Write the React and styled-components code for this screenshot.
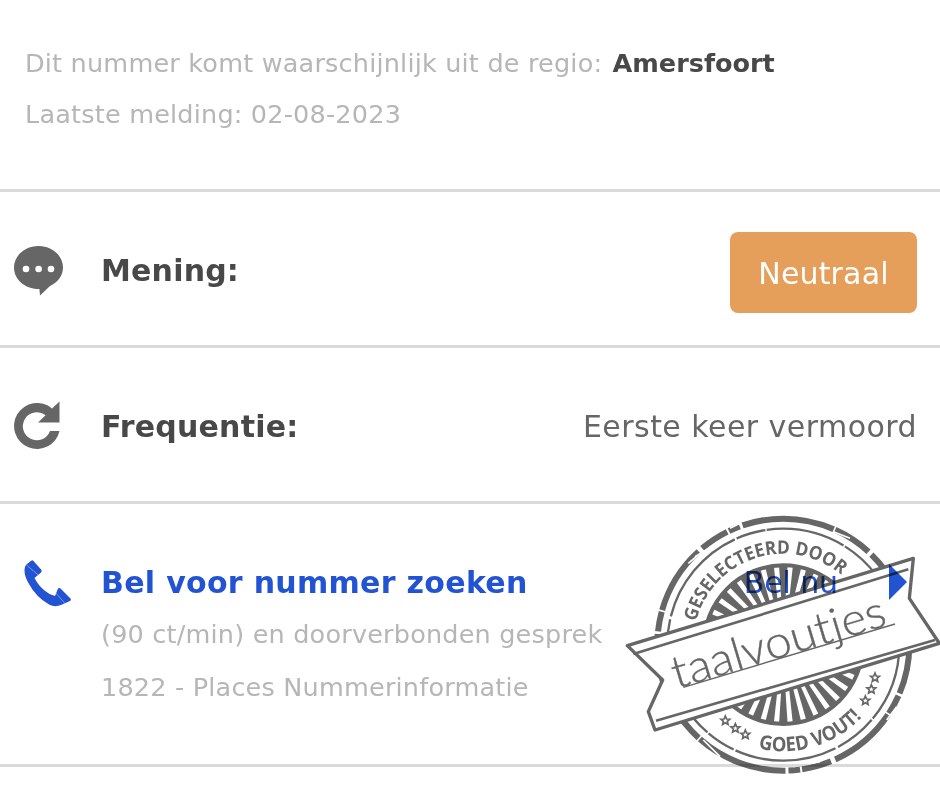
import React from "react";
import styled, { createGlobalStyle } from "styled-components";

const Global = createGlobalStyle`
  html, body { margin: 0; padding: 0; background: #fff; }
  body { font-family: "DejaVu Sans", Verdana, sans-serif; }
`;

const Page = styled.div`
  position: relative;
  width: 940px;
  height: 789px;
  overflow: hidden;
  background: #fff;
`;

const Intro = styled.section`
  height: 192px;
  padding: 48px 25px 0;
  box-sizing: border-box;
  border-bottom: 3px solid #dadada;
  display: flex;
  flex-direction: column;
  gap: 20px;
`;

const IntroLine = styled.p`
  margin: 0;
  font-size: 25.5px;
  letter-spacing: 0.2px;
  line-height: 31px;
  color: #b6b6b6;
  white-space: nowrap;
  b { color: #484848; font-weight: 700; letter-spacing: 0; margin-left: 2px; }
`;

const Row = styled.section`
  height: ${(p) => p.$h}px;
  box-sizing: border-box;
  border-bottom: 3px solid #dadada;
  display: flex;
  align-items: ${(p) => (p.$top ? "flex-start" : "center")};
  padding: ${(p) => (p.$top ? "58px 23px 0 0" : "7px 23px 0 0")};
`;

const IconCell = styled.div`
  width: 101px;
  flex: none;
  display: flex;
  padding-left: ${(p) => p.$pad}px;
  margin-top: ${(p) => p.$shift}px;
  box-sizing: border-box;
`;

const Label = styled.div`
  flex: 1;
  font-size: 30px;
  font-weight: 700;
  letter-spacing: 0.2px;
  color: #484848;
  padding-bottom: 3px;
`;

const Value = styled.div`
  font-size: 30px;
  letter-spacing: 0.45px;
  color: #666;
  white-space: nowrap;
  padding-bottom: 3px;
`;

const Badge = styled.div`
  width: 187px;
  height: 81px;
  border-radius: 8px;
  background: #e59f5a;
  color: #fff;
  font-size: 30px;
  letter-spacing: 0.15px;
  padding-top: 2px;
  box-sizing: border-box;
  display: flex;
  align-items: center;
  justify-content: center;
`;

const CallBody = styled.div`
  flex: 1;
  min-width: 0;
`;

const CallHead = styled.div`
  display: flex;
  align-items: center;
  height: 40px;
  color: #2253d3;
`;

const CallTitle = styled.div`
  flex: 1;
  font-size: 30px;
  font-weight: 700;
  letter-spacing: 0.3px;
  white-space: nowrap;
`;

const CallNow = styled.div`
  font-size: 30px;
  letter-spacing: -0.1px;
  display: flex;
  align-items: center;
  gap: 51px;
  margin-right: 10px;
`;

const Arrow = styled.span`
  width: 0;
  height: 0;
  border-top: 18px solid transparent;
  border-bottom: 18px solid transparent;
  border-left: 18px solid #2253d3;
`;

const Sub = styled.div`
  font-size: 25.5px;
  line-height: 31px;
  letter-spacing: 0.2px;
  color: #b6b6b6;
  margin-top: ${(p) => p.$mt}px;
  white-space: nowrap;
`;

const Stamp = styled.svg`
  position: absolute;
  left: 620px;
  top: 500px;
  mix-blend-mode: multiply;
`;

const C = { x: 490, y: 434 };
const pt = (r, deg) => {
  const a = (deg * Math.PI) / 180;
  return [C.x + r * Math.cos(a), C.y + r * Math.sin(a)];
};

const RAY_COUNT = 36;
const rays = Array.from({ length: RAY_COUNT }, (_, i) => {
  const d = i * (360 / RAY_COUNT);
  const w = 3.1;
  const p = [pt(238, d - w), pt(238, d + w), pt(110, d + w * 0.75), pt(110, d - w * 0.75)];
  return p.map((q) => q.map((v) => v.toFixed(1)).join(",")).join(" ");
});

const star = (cx, cy, r) =>
  Array.from({ length: 10 }, (_, i) => {
    const rr = i % 2 ? r * 0.45 : r;
    const a = (i * 36 - 90) * (Math.PI / 180);
    return `${(cx + rr * Math.cos(a)).toFixed(1)},${(cy + rr * Math.sin(a)).toFixed(1)}`;
  }).join(" ");

const STARS = [
  [316, 662], [346, 685], [376, 704],
  [765, 533], [754, 568], [736, 602],
];

const SCRATCHES = [
  "M225 170 262 148", "M205 190 240 160", "M640 95 690 115", "M330 85 360 70",
  "M150 610 190 650", "M250 720 300 770", "M520 800 600 785", "M800 660 830 620",
  "M130 260 160 215", "M850 330 870 390",
];

const ChatIcon = () => (
  <svg width="50" height="50" viewBox="0 0 50 50">
    <path
      fill="#666"
      d="M24.500 0C11 0 0 9.500 0 21.500 0 33.500 11 43 24.500 43c0.300 0 0.600 0 0.900 0L26 49.500 36 40C43.800 36.500 49 29.500 49 21.500 49 9.500 38 0 24.500 0Z"
    />
    <circle cx="12" cy="23" r="3.300" fill="#fff" />
    <circle cx="24.600" cy="23" r="3.300" fill="#fff" />
    <circle cx="37" cy="23" r="3.300" fill="#fff" />
  </svg>
);

const RefreshIcon = () => (
  <svg width="48" height="48" viewBox="0 0 48 48">
    <path
      fill="#666"
      d="M46.500 0.500V21.500H25L32.600 14.300A14 14 0 1 0 37 30H46.500A23 23 0 1 1 39 7.500Z"
    />
  </svg>
);

const PhoneIcon = () => (
  <svg width="48" height="48" viewBox="0 0 48 48">
    <path
      fill="#2253d3"
      d="M7.500 0.500Q8.500 0 9.500 1L17.500 10Q18 11.500 17 12.500L10.500 18Q14 25 20.500 30.500Q25 34.500 31 36L34 28.500Q35.500 27.500 37 29L46.500 38.500Q47.500 40 46 41L37 45Q31 47.500 25 44.500Q12 37 5 24Q-1 14 1 7Q1.500 5 3 4Z"
    />
    <path d="M2.500 5 16 16.500M31 32 41 43.500" stroke="#fff" strokeWidth="0.800" fill="none" opacity="0.5" />
  </svg>
);

const StampArt = () => (
  <Stamp width="320" height="289" viewBox="0 0 960 867">
    <defs>
      <path id="arcTop" d="M 228 365 A 270 270 0 0 1 665 226" fill="none" />
      <path id="arcBottom" d="M 415 745 A 322 322 0 0 0 725 652" fill="none" />
    </defs>
    <g fill="none" stroke="#666">
      <circle cx={C.x} cy={C.y} r="378" strokeWidth="18" strokeDasharray="150 8 60 5 210 14 90 6 35 9 280 5 120 12 60 5" />
      <circle cx={C.x} cy={C.y} r="348" strokeWidth="7" strokeDasharray="240 5 130 9 310 6 90 4" />
      <circle cx={C.x} cy={C.y} r="238" strokeWidth="12" />
    </g>
    <path d={SCRATCHES.join(" ")} stroke="#fff" strokeWidth="5" fill="none" />
    <g fill="#666">
      {rays.map((p, i) => (
        <polygon key={i} points={p} />
      ))}
      <text fontFamily="'Open Sans', sans-serif" fontWeight="700" fontSize="56">
        <textPath href="#arcTop" textLength="546" lengthAdjust="spacingAndGlyphs">GESELECTEERD DOOR</textPath>
      </text>
      <text fontFamily="'Open Sans', sans-serif" fontWeight="700" fontSize="60">
        <textPath href="#arcBottom" textLength="340" lengthAdjust="spacingAndGlyphs">GOED VOUT!</textPath>
      </text>
    </g>
    {STARS.map(([x, y], i) => (
      <polygon key={i} points={star(x, y, 14)} fill="#fff" stroke="#666" strokeWidth="5" />
    ))}
    <polygon
      points="22,437 880,175 868,295 958,430 105,690 85,635 128,540"
      fill="#fff"
      stroke="#666"
      strokeWidth="10"
      strokeLinejoin="round"
    />
    <path d="M40 462 865 208M108 662 945 420" stroke="#666" strokeWidth="8" fill="none" />
    <path d="M190 562 825 372" stroke="#666" strokeWidth="4" fill="none" />
    <g transform="rotate(-16.7 170 568)">
      <text x="170" y="566" fontFamily="Lato, sans-serif" fontWeight="300" fontSize="135" textLength="665" lengthAdjust="spacingAndGlyphs" fill="#666" stroke="#666" strokeWidth="1">
        taalvoutjes
      </text>
    </g>
  </Stamp>
);

export default function App() {
  return (
    <Page>
      <Global />
      <Intro>
        <IntroLine>
          Dit nummer komt waarschijnlijk uit de regio: <b>Amersfoort</b>
        </IntroLine>
        <IntroLine>Laatste melding: 02-08-2023</IntroLine>
      </Intro>
      <Row $h={156}>
        <IconCell $pad={14} $shift={-3}><ChatIcon /></IconCell>
        <Label>Mening:</Label>
        <Badge>Neutraal</Badge>
      </Row>
      <Row $h={156}>
        <IconCell $pad={13} $shift={-6}><RefreshIcon /></IconCell>
        <Label>Frequentie:</Label>
        <Value>Eerste keer vermoord</Value>
      </Row>
      <Row $h={263} $top>
        <IconCell $pad={24} $shift={-2}><PhoneIcon /></IconCell>
        <CallBody>
          <CallHead>
            <CallTitle>Bel voor nummer zoeken</CallTitle>
            <CallNow>Bel nu<Arrow /></CallNow>
          </CallHead>
          <Sub $mt={17}>(90 ct/min) en doorverbonden gesprek</Sub>
          <Sub $mt={22}>1822 - Places Nummerinformatie</Sub>
        </CallBody>
      </Row>
      <StampArt />
    </Page>
  );
}
